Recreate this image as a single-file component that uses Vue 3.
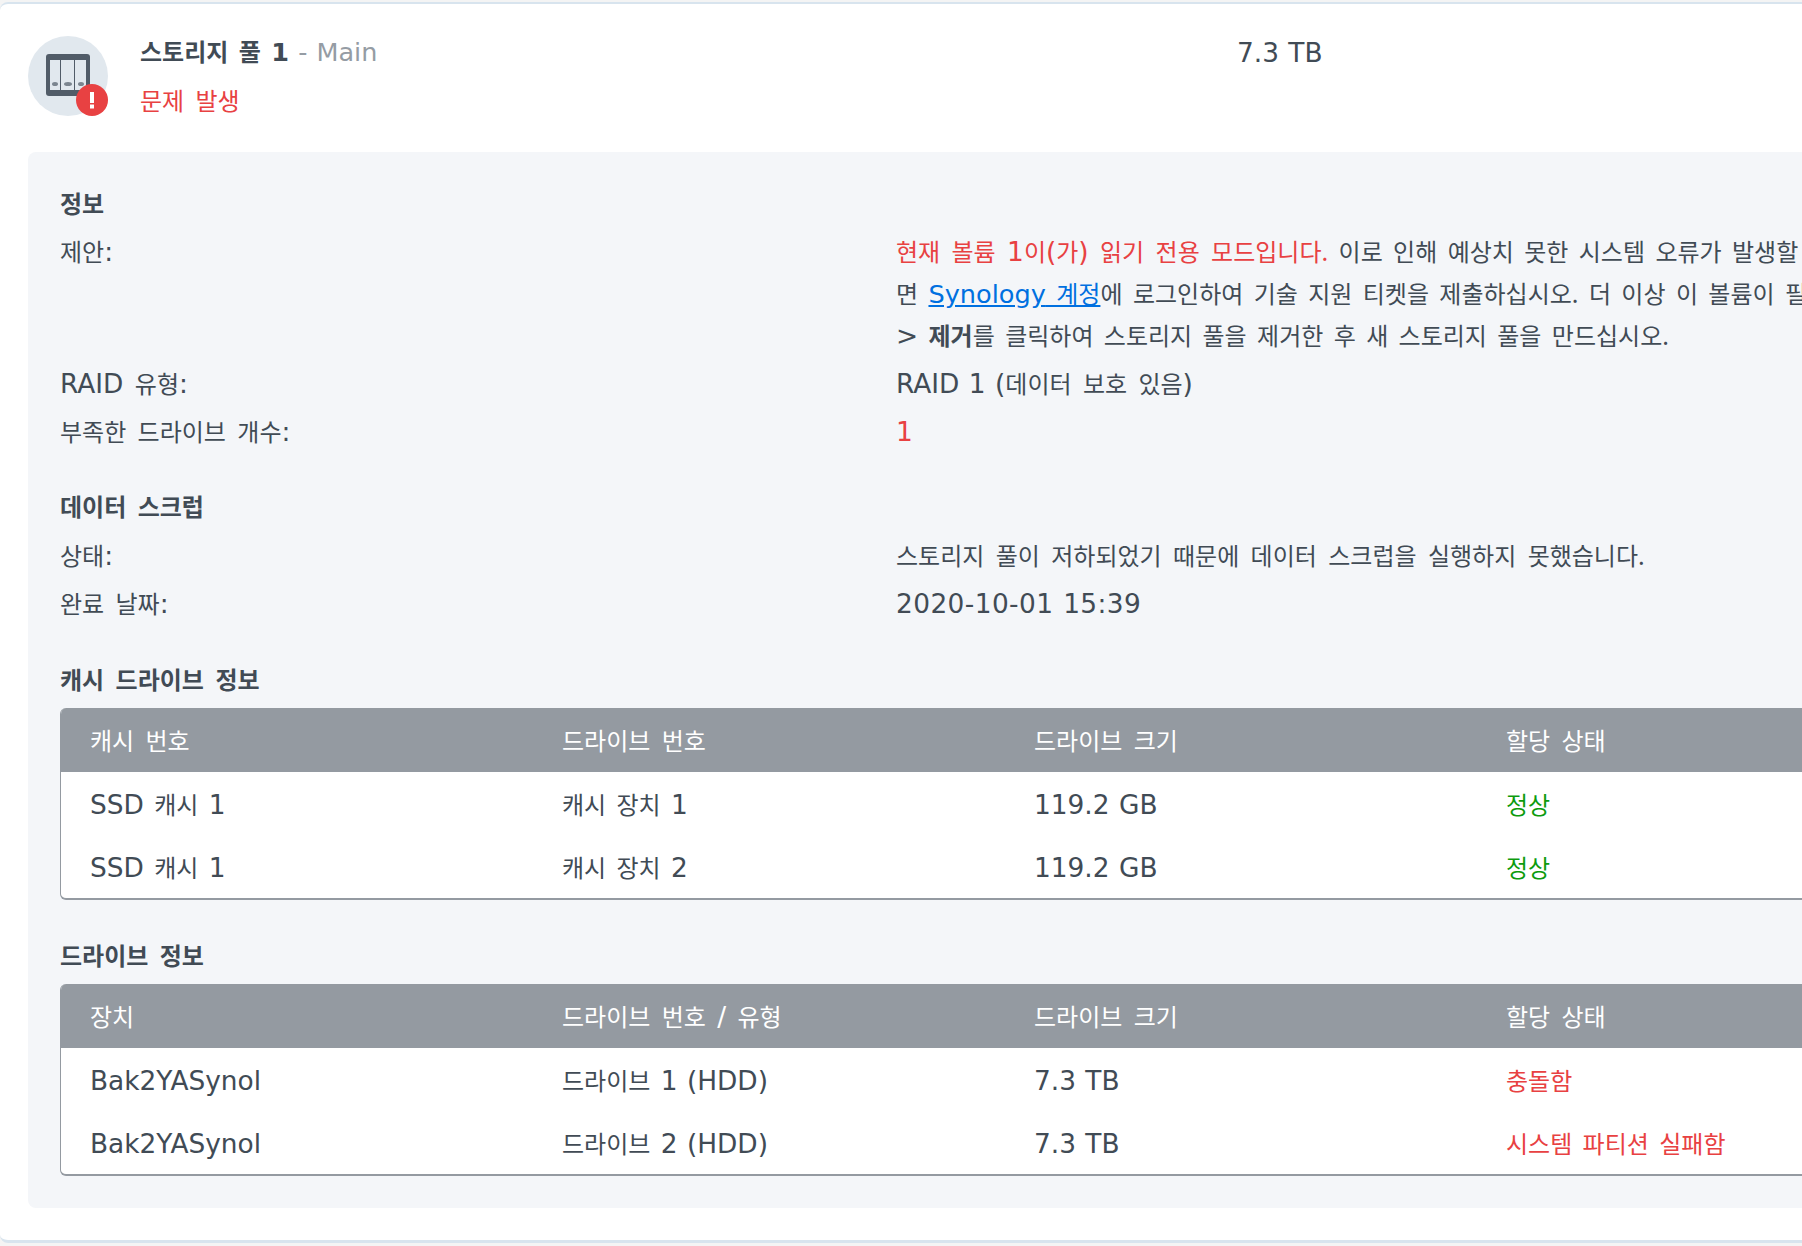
<script setup>
const cacheRows = [
  { name: 'SSD', drive: '캐시 장치', num: '1', size: '119.2 GB', status: '정상' },
  { name: 'SSD', drive: '캐시 장치', num: '2', size: '119.2 GB', status: '정상' }
]

const driveRows = [
  { name: 'Bak2YASynol', drive: '드라이브', num: '1 (HDD)', size: '7.3 TB', status: '충돌함' },
  { name: 'Bak2YASynol', drive: '드라이브', num: '2 (HDD)', size: '7.3 TB', status: '시스템 파티션 실패함' }
]
</script>

<template>
  <div class="page">
    <div class="card">
      <div class="pool-head">
        <svg class="pool-icon" width="80" height="80" viewBox="0 0 80 80">
          <circle cx="40" cy="40" r="40" fill="#e1e8ee" />
          <rect x="18" y="18" width="44" height="42" rx="3" fill="#515c68" />
          <rect x="22" y="24" width="10" height="30" fill="#e1e8ee" />
          <rect x="33" y="24" width="13" height="30" fill="#e1e8ee" />
          <rect x="47" y="24" width="11" height="30" fill="#e1e8ee" />
          <ellipse cx="27" cy="48" rx="3" ry="2" fill="#7b858f" />
          <ellipse cx="40" cy="48" rx="4" ry="2" fill="#7b858f" />
          <ellipse cx="53" cy="48" rx="3" ry="2" fill="#7b858f" />
          <circle cx="64" cy="64" r="16" fill="#e84142" />
          <rect x="62" y="56" width="4" height="11" fill="#fff" />
          <rect x="62" y="68.500" width="4" height="4" fill="#fff" />
        </svg>
        <div class="pool-title">
          <div class="title-line"><b>스토리지 풀 <span class="en">1</span></b><span class="sub"><span class="en"> - Main</span></span></div>
          <div class="status-line red">문제 발생</div>
        </div>
        <div class="pool-size"><span class="en">7.3 TB</span></div>
      </div>

      <div class="panel">
        <h4 class="first">정보</h4>
        <div class="row tall">
          <div>제안<span class="en">:</span></div>
          <div class="value">
            <div class="line-one"><span class="red">현재 볼륨 <span class="en">1</span>이<span class="en">(</span>가<span class="en">)</span> 읽기 전용 모드입니다.</span> 이로 인해 예상치 못한 시스템 오류가 발생할</div>
            <div class="line-two">면 <a href="#" class="link"><span class="en">Synology</span> 계정</a>에 로그인하여 기술 지원 티켓을 제출하십시오. 더 이상 이 볼륨이 필요</div>
            <div class="line-three"><span class="en">&gt;</span> <b>제거</b>를 클릭하여 스토리지 풀을 제거한 후 새 스토리지 풀을 만드십시오.</div>
          </div>
        </div>
        <div class="row">
          <div><span class="en">RAID</span> 유형<span class="en">:</span></div>
          <div class="value"><span class="en">RAID 1 (</span>데이터 보호 있음<span class="en">)</span></div>
        </div>
        <div class="row">
          <div>부족한 드라이브 개수<span class="en">:</span></div>
          <div class="value red"><span class="en">1</span></div>
        </div>

        <h4>데이터 스크럽</h4>
        <div class="row">
          <div>상태<span class="en">:</span></div>
          <div class="value">스토리지 풀이 저하되었기 때문에 데이터 스크럽을 실행하지 못했습니다.</div>
        </div>
        <div class="row">
          <div>완료 날짜<span class="en">:</span></div>
          <div class="value"><span class="en date">2020-10-01 15:39</span></div>
        </div>

        <h4 class="before-table">캐시 드라이브 정보</h4>
        <div class="grid">
          <div class="grid-head">
            <div>캐시 번호</div>
            <div>드라이브 번호</div>
            <div>드라이브 크기</div>
            <div>할당 상태</div>
          </div>
          <div v-for="row in cacheRows" :key="row.num" class="grid-row">
            <div><span class="en">{{ row.name }}</span> 캐시 <span class="en">1</span></div>
            <div>{{ row.drive }} <span class="en">{{ row.num }}</span></div>
            <div><span class="en">{{ row.size }}</span></div>
            <div class="green">{{ row.status }}</div>
          </div>
        </div>

        <h4 class="before-table second">드라이브 정보</h4>
        <div class="grid">
          <div class="grid-head">
            <div>장치</div>
            <div>드라이브 번호 <span class="en">/</span> 유형</div>
            <div>드라이브 크기</div>
            <div>할당 상태</div>
          </div>
          <div v-for="row in driveRows" :key="row.num" class="grid-row">
            <div><span class="en">{{ row.name }}</span></div>
            <div>{{ row.drive }} <span class="en">{{ row.num }}</span></div>
            <div><span class="en">{{ row.size }}</span></div>
            <div class="red">{{ row.status }}</div>
          </div>
        </div>
      </div>
    </div>
  </div>
</template>

<style>
html, body {
  margin: 0;
  background: #f4f4f4;
  overflow: hidden;
}
</style>

<style scoped>
.page {
  width: 1802px;
  height: 1246px;
  padding-top: 2px;
  box-sizing: border-box;
  overflow: hidden;
  font-family: "Noto Sans CJK KR", "DejaVu Sans", sans-serif;
  font-size: 24px;
  word-spacing: 6px;
  color: #414b55;
}

.card {
  width: 2100px;
  height: 1241px;
  box-sizing: border-box;
  background: #fff;
  border-top: 2px solid #d8e4ee;
  border-bottom: 3px solid #d8e4ee;
  border-radius: 8px;
}

.en {
  font-family: "DejaVu Sans", sans-serif;
  font-size: 26.400px;
  line-height: 1;
  word-spacing: 1px;
}

.date {
  letter-spacing: 0.400px;
}

.pool-head {
  display: flex;
  height: 148px;
  padding: 32px 0 0 28px;
  box-sizing: border-box;
}

.pool-icon {
  flex: none;
}

.pool-title {
  width: 1097px;
  margin-left: 32px;
}

.title-line {
  height: 36px;
  line-height: 30px;
}

.title-line b {
  word-spacing: 5px;
}

.title-line .en {
  font-size: 25.500px;
  word-spacing: 1px;
}

.sub {
  color: #959ca4;
}

.status-line {
  height: 36px;
  margin-top: 12px;
  line-height: 32px;
}

.pool-size {
  line-height: 32px;
}

.panel {
  margin-left: 28px;
  width: 2072px;
  height: 1056px;
  box-sizing: border-box;
  padding: 32px;
  background: #f4f6f9;
  border-radius: 8px;
}

h4 {
  margin: 27px 0 0;
  font-size: 24px;
  line-height: 48px;
  height: 49px;
  font-weight: 700;
}

h4.first {
  margin-top: -5px;
  margin-bottom: 2px;
}

h4.before-table {
  margin-top: 38px;
  height: 28px;
  line-height: 28px;
  margin-bottom: 15px;
}

h4.before-table.second {
  margin-top: 41px;
}

.row {
  display: grid;
  grid-template-columns: 836px 1fr;
  line-height: 48px;
  white-space: nowrap;
}

.row.tall {
  line-height: 42px;
  padding-bottom: 3px;
}

.line-one,
.line-two,
.line-three {
  word-spacing: 5px;
}

.line-one .red {
  word-spacing: 6px;
}

.link {
  color: #0070e0;
  text-decoration: underline;
}

.link .en {
  font-size: 25.600px;
}

.red {
  color: #e84142;
}

.green {
  color: #0d9b0d;
}

.grid {
  width: 1888px;
  box-sizing: border-box;
  background: #fff;
  border-left: 1px solid #949aa1;
  border-bottom: 2px solid #949aa1;
  border-radius: 6px;
  overflow: hidden;
}

.grid-head,
.grid-row {
  display: grid;
  grid-template-columns: repeat(4, 472px);
  align-items: center;
  height: 64px;
  margin-left: -1px;
  white-space: nowrap;
}

.grid-head {
  background: #949aa1;
  color: #fff;
}

.grid-row {
  word-spacing: 5px;
}

.grid-head > div,
.grid-row > div {
  padding-left: 30px;
  padding-bottom: 2px;
}

.grid-row:last-child {
  height: 62px;
}
</style>
